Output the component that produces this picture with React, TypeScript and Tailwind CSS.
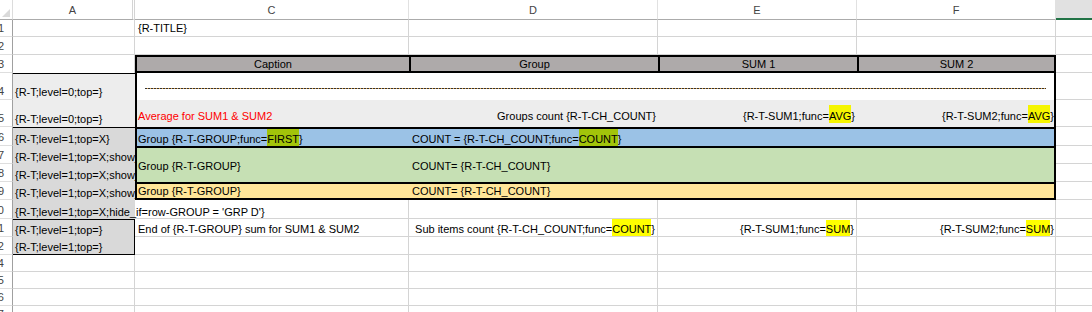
import type { ReactNode } from "react";

// Every sheet row uses the same column widths: row header, A, C, D, E, F, G.
// Column B is hidden, which is why the header shows a double rule after A.
const cols = "grid grid-cols-[13px_122px_274px_249px_199px_199px_1fr]";
const line = "border-r border-b border-[#d4d4d4]";
const text = "flex min-w-0 overflow-hidden whitespace-nowrap";

function Num({ n, className = "" }: { n: string; className?: string }) {
  return (
    <div
      className={`flex items-end justify-end overflow-hidden whitespace-nowrap border-r border-b border-r-[#a0a0a0] border-b-[#dedede] pr-[8px] pb-px text-[#444] ${className}`}
    >
      {n}
    </div>
  );
}

function Mark({ children, className }: { children: ReactNode; className: string }) {
  return <span className={className}>{children}</span>;
}

function EmptyRow({ n, h }: { n: string; h: string }) {
  return (
    <div className={`${cols} ${h}`}>
      <Num n={n} />
      <div className={line} />
      <div className={line} />
      <div className={line} />
      <div className={line} />
      <div className={line} />
      <div className="border-b border-[#d4d4d4]" />
    </div>
  );
}

function ColumnHeader() {
  return (
    <div className={`${cols} h-[20px] text-[#444]`}>
      <div className="flex items-end justify-end border-r border-b border-r-[#dcdcdc] border-b-[#ababab] pr-[2px] pb-[2px]">
        <svg width="8" height="8" viewBox="0 0 8 8">
          <polygon points="8,0 8,8 0,8" fill="#dadada" />
        </svg>
      </div>
      <div className="flex items-end justify-center border-r-[3px] border-b border-double border-r-[#d4d4d4] border-b-[#ababab] pb-[2px]">
        A
      </div>
      <div className="flex items-end justify-center border-r border-b border-r-[#e1e1e1] border-b-[#ababab] pb-[2px]">
        C
      </div>
      <div className="flex items-end justify-center border-r border-b border-r-[#e1e1e1] border-b-[#ababab] pb-[2px]">
        D
      </div>
      <div className="flex items-end justify-center border-r border-b border-r-[#e1e1e1] border-b-[#ababab] pb-[2px]">
        E
      </div>
      <div className="flex items-end justify-center border-r border-b border-r-[#e1e1e1] border-b-[#ababab] pb-[2px]">
        F
      </div>
      <div className="border-b-2 border-[#217346] bg-[#e1e1e1]" />
    </div>
  );
}

export default function App() {
  return (
    <div className="h-[312px] w-[1092px] overflow-hidden bg-white font-['Liberation_Sans',Arial,sans-serif] text-[11px] leading-[13px] text-black">
      <ColumnHeader />

      {/* 1 */}
      <div className={`${cols} h-[17px]`}>
        <Num n="1" />
        <div className={line} />
        <div className={`${line} ${text} items-end pb-px pl-[3px]`}>{"{R-TITLE}"}</div>
        <div className={line} />
        <div className={line} />
        <div className={line} />
        <div className="border-b border-[#d4d4d4]" />
      </div>

      <EmptyRow n="2" h="h-[18px]" />

      {/* 3: column captions */}
      <div className={`${cols} h-[18px]`}>
        <Num n="3" />
        <div className="border-r border-[#d4d4d4]" />
        <div className="flex items-center justify-center border-y-2 border-l-2 border-black bg-[#aeaaaa]">Caption</div>
        <div className="flex items-center justify-center border-y-2 border-l-2 border-black bg-[#aeaaaa]">Group</div>
        <div className="flex items-center justify-center border-y-2 border-l-2 border-black bg-[#aeaaaa]">SUM 1</div>
        <div className="flex items-center justify-center border-2 border-black bg-[#aeaaaa]">SUM 2</div>
        <div className="border-b border-[#d4d4d4]" />
      </div>

      {/* 4: level 0 header with the separator line */}
      <div className={`${cols} h-[27px]`}>
        <Num n="4" />
        <div className={`${text} items-end border-t border-black bg-[#ededed] pb-px pl-[2px]`}>{"{R-T;level=0;top=}"}</div>
        <div className="col-span-4 border-x-2 border-black bg-white px-[8px] pt-[15px]">
          <div className="h-px bg-[repeating-linear-gradient(90deg,#333_0_2px,#e4a64a_2px_3px)]" />
        </div>
        <div className="border-b border-[#d4d4d4]" />
      </div>

      {/* 5: averages */}
      <div className={`${cols} h-[27px]`}>
        <Num n="5" />
        <div className={`${text} items-end bg-[#ededed] pb-px pl-[2px]`}>{"{R-T;level=0;top=}"}</div>
        <div className={`${text} items-end border-l-2 border-black bg-[#ededed] pb-[4px] pl-px text-[#ff0000]`}>
          Average for SUM1 &amp; SUM2
        </div>
        <div className={`${text} items-end justify-end bg-[#ededed] pr-[2px] pb-[4px]`}>
          {"Groups count {R-T-CH_COUNT}"}
        </div>
        <div className={`${text} items-end justify-end bg-[#ededed] pr-[2px] pb-[4px]`}>
          {"{R-T-SUM1;func="}
          <Mark className="bg-[#f5f500] pt-[5px]">AVG</Mark>
          {"}"}
        </div>
        <div className={`${text} items-end justify-end border-r-2 border-black bg-[#ededed] pb-[4px]`}>
          {"{R-T-SUM2;func="}
          <Mark className="bg-[#f5f500] pt-[5px]">AVG</Mark>
          {"}"}
        </div>
        <div className="border-b border-[#d4d4d4]" />
      </div>

      {/* 6: first group row */}
      <div className={`${cols} h-[19px]`}>
        <Num n="6" />
        <div className={`${text} items-end border-t border-black bg-[#d9d9d9] pl-[2px]`}>{"{R-T;level=1;top=X}"}</div>
        <div className={`${text} items-end border-t-2 border-l-2 border-black bg-[#9bc2e6] pl-px`}>
          {"Group {R-T-GROUP;func="}
          <Mark className="bg-[#a2c40a] pt-[4px]">FIRST</Mark>
          {"}"}
        </div>
        <div className={`${text} items-end border-t-2 border-black bg-[#9bc2e6] pl-[3px]`}>
          {"COUNT = {R-T-CH_COUNT;func="}
          <Mark className="bg-[#a2c40a] pt-[4px]">COUNT</Mark>
          {"}"}
        </div>
        <div className="border-t-2 border-black bg-[#9bc2e6]" />
        <div className="border-t-2 border-r-2 border-black bg-[#9bc2e6]" />
        <div className="border-b border-[#d4d4d4]" />
      </div>

      {/* 7-8: merged group block */}
      <div className={`${cols} h-[36px]`}>
        <div className="flex flex-col">
          <Num n="7" className="flex-1" />
          <Num n="8" className="flex-1" />
        </div>
        <div className="flex flex-col bg-[#d9d9d9]">
          <div className={`${text} flex-1 items-end pl-[2px]`}>{"{R-T;level=1;top=X;show_if=row-GROUP = 'GRP B'}"}</div>
          <div className={`${text} flex-1 items-end pl-[2px]`}>{"{R-T;level=1;top=X;show_if=row-GROUP = 'GRP C'}"}</div>
        </div>
        <div className={`${text} items-center border-t-2 border-l-2 border-black bg-[#c6e0b4] pt-[2px] pl-px`}>
          {"Group {R-T-GROUP}"}
        </div>
        <div className={`${text} items-center border-t-2 border-black bg-[#c6e0b4] pt-[2px] pl-[3px]`}>
          {"COUNT= {R-T-CH_COUNT}"}
        </div>
        <div className="border-t-2 border-black bg-[#c6e0b4]" />
        <div className="border-t-2 border-r-2 border-black bg-[#c6e0b4]" />
        <div className="flex flex-col">
          <div className="flex-1 border-b border-[#d4d4d4]" />
          <div className="flex-1 border-b border-[#d4d4d4]" />
        </div>
      </div>

      {/* 9 */}
      <div className={`${cols} h-[18px]`}>
        <Num n="9" />
        <div className={`${text} items-end bg-[#d9d9d9] pl-[2px]`}>{"{R-T;level=1;top=X;show_if=row-GROUP = 'GRP E'}"}</div>
        <div className={`${text} items-end border-y-2 border-l-2 border-black bg-[#ffe699] pl-px`}>{"Group {R-T-GROUP}"}</div>
        <div className={`${text} items-end border-y-2 border-black bg-[#ffe699] pl-[3px]`}>{"COUNT= {R-T-CH_COUNT}"}</div>
        <div className="border-y-2 border-black bg-[#ffe699]" />
        <div className="border-y-2 border-r-2 border-black bg-[#ffe699]" />
        <div className="border-b border-[#d4d4d4]" />
      </div>

      {/* 10: the long tag runs over the empty C cell */}
      <div className={`${cols} h-[19px]`}>
        <Num n="10" />
        <div className="z-10 flex items-end whitespace-nowrap bg-[#d9d9d9] pl-[2px]">
          {"{R-T;level=1;top=X;hide_if=row-GROUP = 'GRP D'}"}
        </div>
        <div className={line} />
        <div className={line} />
        <div className={line} />
        <div className={line} />
        <div className="border-b border-[#d4d4d4]" />
      </div>

      {/* 11: totals */}
      <div className={`${cols} h-[18px]`}>
        <Num n="11" />
        <div className={`${text} items-end border-t border-r border-black bg-[#d9d9d9] pl-[2px]`}>{"{R-T;level=1;top=}"}</div>
        <div className={`${line} ${text} items-end pl-[3px]`}>{"End of {R-T-GROUP} sum for SUM1 & SUM2"}</div>
        <div className={`${line} ${text} items-end justify-end pr-[2px]`}>
          {"Sub items count {R-T-CH_COUNT;func="}
          <Mark className="bg-[#ffff00] pt-[6px]">COUNT</Mark>
          {"}"}
        </div>
        <div className={`${line} ${text} items-end justify-end pr-[2px]`}>
          {"{R-T-SUM1;func="}
          <Mark className="bg-[#ffff00] pt-[3px]">SUM</Mark>
          {"}"}
        </div>
        <div className={`${line} ${text} items-end justify-end pr-px`}>
          {"{R-T-SUM2;func="}
          <Mark className="bg-[#ffff00] pt-[3px]">SUM</Mark>
          {"}"}
        </div>
        <div className="border-b border-[#d4d4d4]" />
      </div>

      {/* 12 */}
      <div className={`${cols} h-[18px]`}>
        <Num n="12" />
        <div className={`${text} items-end border-r border-b border-black bg-[#d9d9d9] pl-[2px]`}>{"{R-T;level=1;top=}"}</div>
        <div className={line} />
        <div className={line} />
        <div className={line} />
        <div className={line} />
        <div className="border-b border-[#d4d4d4]" />
      </div>

      <EmptyRow n="14" h="h-[17px]" />
      <EmptyRow n="15" h="h-[17px]" />
      <EmptyRow n="16" h="h-[17px]" />
      <EmptyRow n="17" h="h-[17px]" />
    </div>
  );
}
